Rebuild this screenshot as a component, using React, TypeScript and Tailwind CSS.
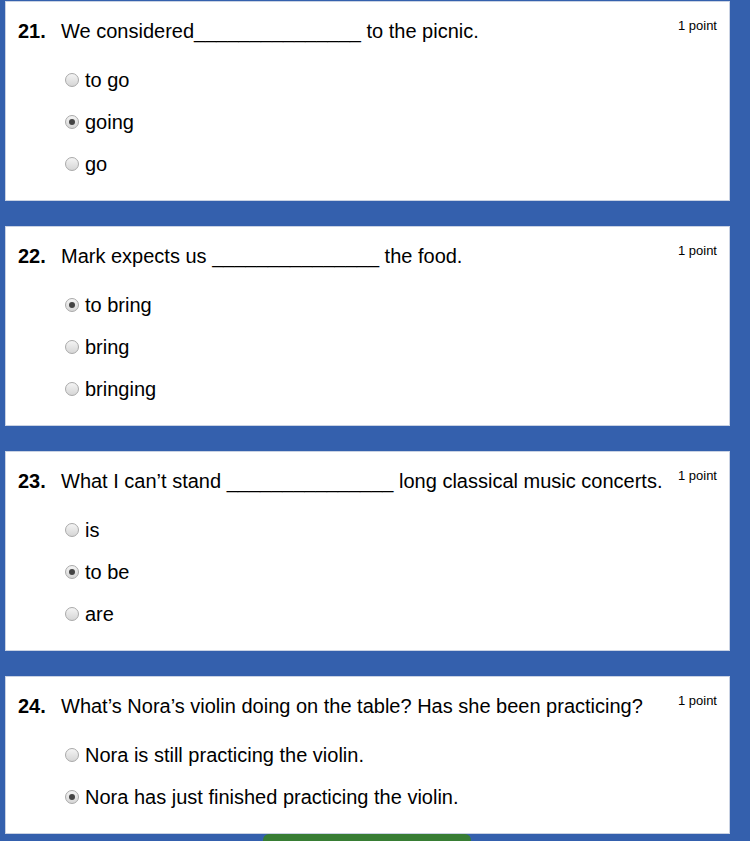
import React from "react";

type Question = {
  num: string;
  before: string;
  blank?: boolean;
  after?: string;
  options: string[];
  checked: number;
};

const questions: Question[] = [
  { num: "21.", before: "We considered", blank: true, after: " to the picnic.", options: ["to go", "going", "go"], checked: 1 },
  { num: "22.", before: "Mark expects us ", blank: true, after: " the food.", options: ["to bring", "bring", "bringing"], checked: 0 },
  { num: "23.", before: "What I can’t stand ", blank: true, after: " long classical music concerts.", options: ["is", "to be", "are"], checked: 1 },
  {
    num: "24.",
    before: "What’s Nora’s violin doing on the table? Has she been practicing?",
    options: ["Nora is still practicing the violin.", "Nora has just finished practicing the violin."],
    checked: 1,
  },
];

function Radio({ on }: { on: boolean }) {
  return (
    <span className="w-[14px] h-[14px] rounded-full border border-[#a9a9a9] bg-gradient-to-b from-[#f4f4f4] to-[#d6d6d6] flex items-center justify-center shrink-0">
      {on && <span className="w-[6px] h-[6px] rounded-full bg-[#444]" />}
    </span>
  );
}

function Card({ q }: { q: Question }) {
  return (
    <div className="bg-white border border-[#c9d2e3] w-[725px] pl-[12px] pr-[12px] pt-[17px] pb-[24px]">
      <div className="flex items-start">
        <span className="w-[43px] shrink-0 font-bold text-[20px] leading-[24px]">{q.num}</span>
        <span className="flex-1 text-[20px] leading-[24px] whitespace-nowrap">
          {q.before}
          {q.blank && "_______________"}
          {q.after}
        </span>
        <span className="text-[13px] leading-[16px] mt-[-1px] ml-[10px] whitespace-nowrap">1 point</span>
      </div>
      <div className="flex flex-col gap-[18px] mt-[25px] pl-[47px]">
        {q.options.map((o, i) => (
          <div key={o} className="flex items-center gap-[6px] h-[24px]">
            <Radio on={i === q.checked} />
            <span className="text-[20px] leading-[24px]">{o}</span>
          </div>
        ))}
      </div>
    </div>
  );
}

export default function App() {
  return (
    <div
      className="bg-[#3460ad] h-[841px] w-[750px] overflow-hidden pl-[5px] pt-[1px] text-black"
      style={{ fontFamily: '"Liberation Sans", Arial, sans-serif' }}
    >
      <div className="flex flex-col gap-[25px]">
        {questions.map((q) => (
          <Card key={q.num} q={q} />
        ))}
      </div>
      <div className="ml-[258px] w-[208px] h-[12px] rounded-t-[6px] bg-[#377d34]" />
    </div>
  );
}
